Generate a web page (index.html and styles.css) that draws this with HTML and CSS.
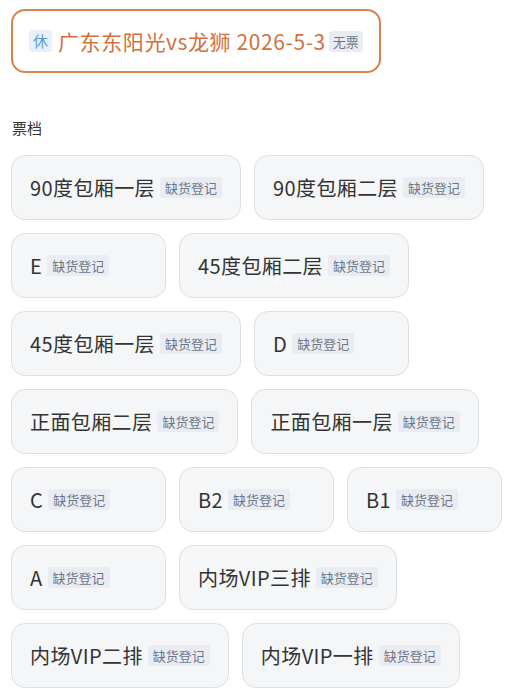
FILE: index.html
```html
<!DOCTYPE html>
<html lang="zh-CN">
  <head>
    <meta charset="utf-8" />
    <meta name="viewport" content="width=device-width, initial-scale=1.0" />
    <title>票档</title>
    <link rel="stylesheet" href="styles.css">
  </head>
  <body>
    <div class="page">
      <div class="match">
        <span class="tag-rest">休</span>
        <span class="match-title">广东东阳光vs龙狮 2026-5-3</span>
        <span class="tag-none">无票</span>
      </div>

      <h5 class="section-title">票档</h5>

      <div class="tiers">
        <div class="tier"><span class="tier-name">90度包厢一层</span><span class="tier-tag">缺货登记</span></div>
        <div class="tier"><span class="tier-name">90度包厢二层</span><span class="tier-tag">缺货登记</span></div>
        <div class="tier"><span class="tier-name">E</span><span class="tier-tag">缺货登记</span></div>
        <div class="tier"><span class="tier-name">45度包厢二层</span><span class="tier-tag">缺货登记</span></div>
        <div class="tier"><span class="tier-name">45度包厢一层</span><span class="tier-tag">缺货登记</span></div>
        <div class="tier"><span class="tier-name">D</span><span class="tier-tag">缺货登记</span></div>
        <div class="tier"><span class="tier-name">正面包厢二层</span><span class="tier-tag">缺货登记</span></div>
        <div class="tier"><span class="tier-name">正面包厢一层</span><span class="tier-tag">缺货登记</span></div>
        <div class="tier"><span class="tier-name">C</span><span class="tier-tag">缺货登记</span></div>
        <div class="tier"><span class="tier-name">B2</span><span class="tier-tag">缺货登记</span></div>
        <div class="tier"><span class="tier-name">B1</span><span class="tier-tag">缺货登记</span></div>
        <div class="tier"><span class="tier-name">A</span><span class="tier-tag">缺货登记</span></div>
        <div class="tier"><span class="tier-name">内场VIP三排</span><span class="tier-tag">缺货登记</span></div>
        <div class="tier"><span class="tier-name">内场VIP二排</span><span class="tier-tag">缺货登记</span></div>
        <div class="tier"><span class="tier-name">内场VIP一排</span><span class="tier-tag">缺货登记</span></div>
      </div>
    </div>
  </body>
</html>
```

FILE: styles.css
```css
body{
  margin: 0;
  background: #ffffff;
  font-family: "Noto Sans CJK SC", "Noto Sans", sans-serif;
  color: #333333;
}
.page{
  padding: 9px 11px 0 11px;
}
.match{
  display: inline-flex;
  align-items: center;
  height: 60px;
  padding: 0 16px;
  border: 2px solid #d9834f;
  border-radius: 14px;
}
.tag-rest{
  font-size: 15px;
  line-height: 22px;
  padding: 0 4px;
  margin-right: 6px;
  border-radius: 3px;
  background: #e8f1fa;
  color: #5b9bd6;
}
.match-title{
  font-size: 21px;
  letter-spacing: 0.6px;
  color: #d3703b;
  white-space: nowrap;
}
.tag-none{
  font-size: 13px;
  line-height: 21px;
  padding: 0 4px;
  margin-left: 3px;
  border-radius: 3px;
  background: #e9edf3;
  color: #6d7685;
}
.section-title{
  margin: 44px 0 0 1px;
  font-size: 15px;
  font-weight: normal;
  line-height: 22px;
  color: #333333;
}
.tiers{
  display: flex;
  flex-wrap: wrap;
  gap: 13px;
  margin-top: 16px;
  width: 510px;
}
.tier{
  display: flex;
  align-items: center;
  box-sizing: border-box;
  min-width: 155px;
  height: 65px;
  padding: 0 18px;
  background: #f5f6f8;
  border: 1px solid #dcdfe3;
  border-radius: 14px;
}
.tier-name{
  font-size: 20px;
  letter-spacing: 0.4px;
  color: #333333;
  white-space: nowrap;
}
.tier-tag{
  margin-left: 5px;
  padding: 0 5px;
  font-size: 13px;
  line-height: 21px;
  border-radius: 3px;
  background: #e9edf3;
  color: #6d7685;
  white-space: nowrap;
}
```
